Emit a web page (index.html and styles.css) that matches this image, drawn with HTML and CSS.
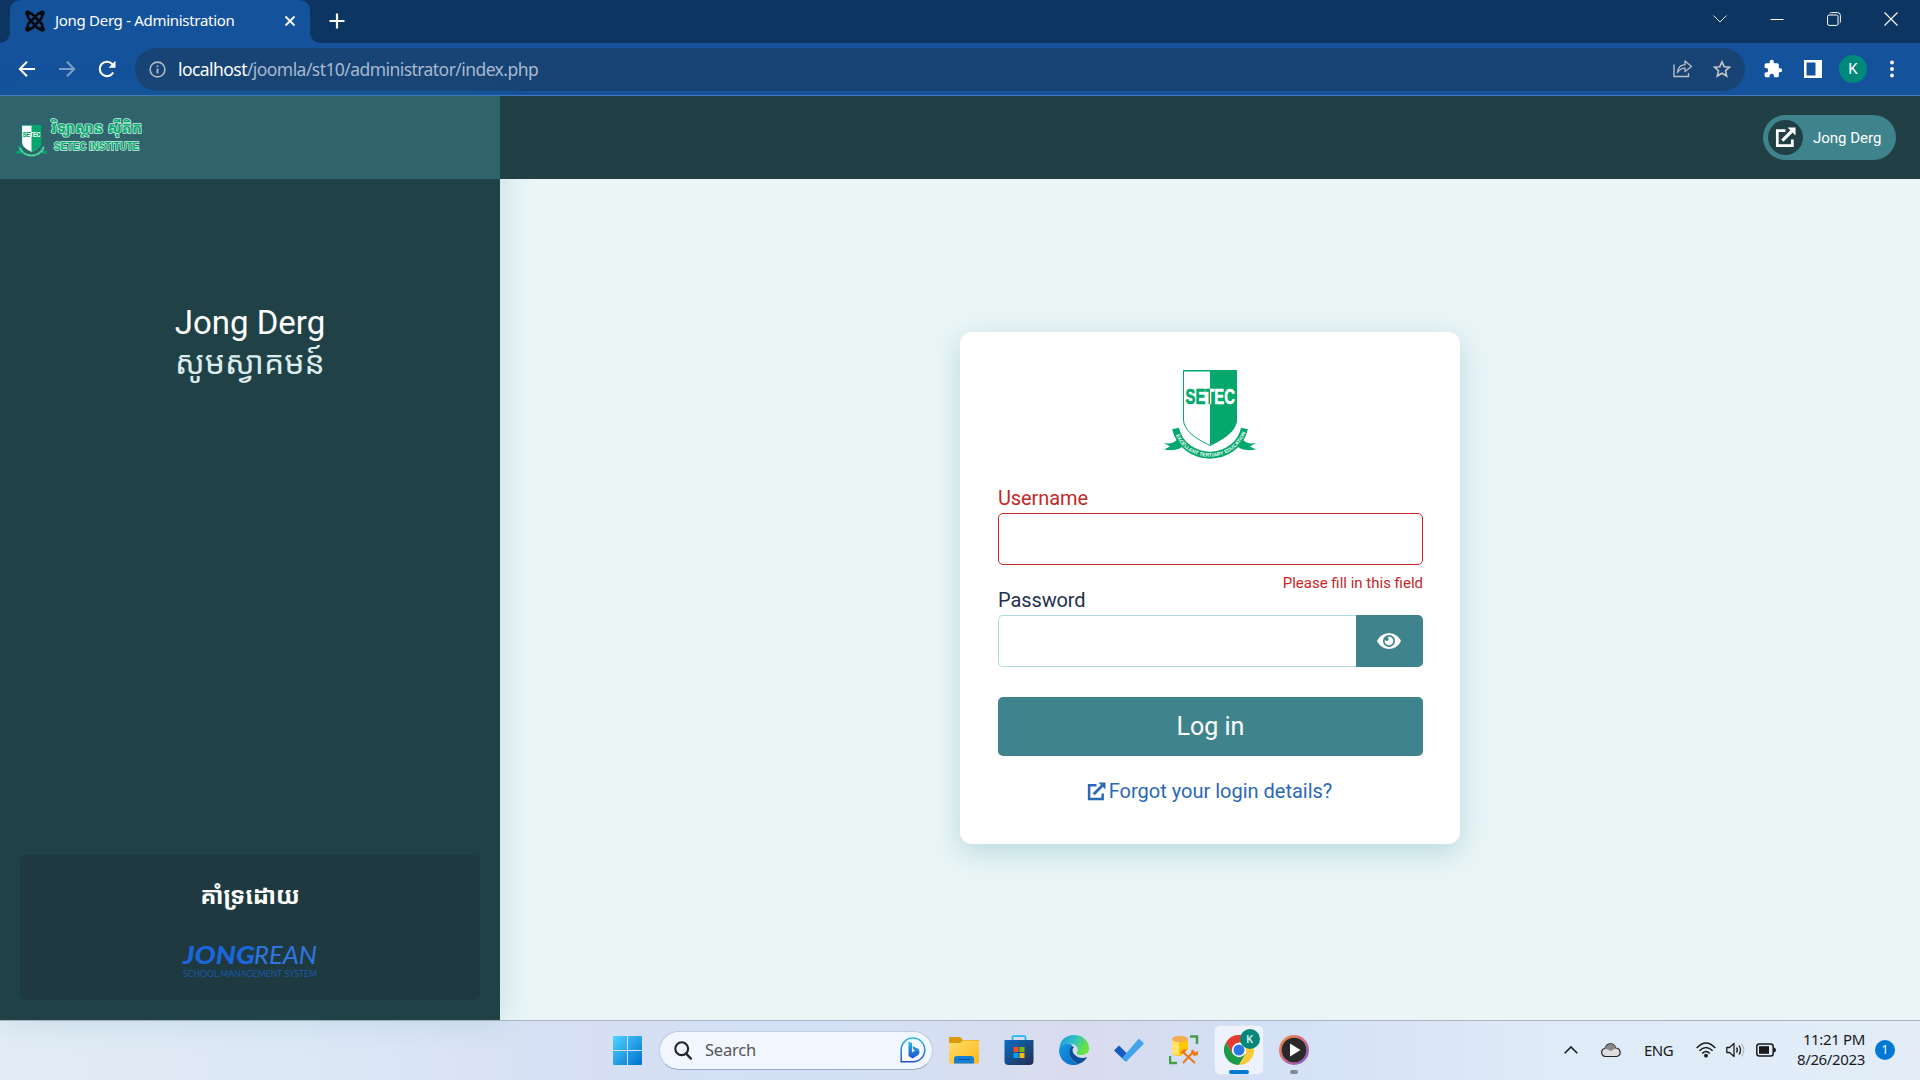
FILE: index.html
```html
<!DOCTYPE html>
<html lang="en">
<head>
<meta charset="utf-8">
<title>Jong Derg - Administration</title>
<link rel="stylesheet" href="styles.css">
</head>
<body>
<svg class="defs" width="0" height="0" aria-hidden="true">
  <defs>
    <linearGradient id="split" gradientUnits="userSpaceOnUse" x1="0" y1="0" x2="92" y2="0">
      <stop offset=".5" stop-color="#04a76c"/><stop offset=".5" stop-color="#fff"/>
    </linearGradient>
    <symbol id="crest" viewBox="0 0 92 89">
      <path d="M19.500 .5H72.500V49C72.500 61 59.500 69 46 75.500C32.500 69 19.500 61 19.500 49Z" fill="#fff" stroke="#04a76c"/>
      <path d="M46 .5H73V49C73 61 59.500 69 46 75.500ZM19.500 0H73V1.500H19.500Z" fill="#04a76c"/>
      <path d="M14 62C16 70 10 75 0 73L6 76.500L0 79.500C9 81 16 80 20 75ZM78 62C76 70 82 75 92 73L86 76.500L92 79.500C83 81 76 80 72 75Z" fill="#04a76c"/>
      <path d="M11.500 58.500C20 94 72 94 80.500 58.500" fill="none" stroke="#04a76c" stroke-width="7"/>
      <path id="ribbon" d="M10.500 62.500C23 95 69 95 82 61.500" fill="none"/>
      <text class="crest-name" x="21.500" y="33.500" textLength="49.500" lengthAdjust="spacingAndGlyphs" fill="url(#split)">SETEC</text>
      <text class="crest-motto"><textPath href="#ribbon" startOffset="3">EXCELLENT TERTIARY EDUCATION</textPath></text>
    </symbol>
    <symbol id="external" viewBox="0 0 20 20">
      <path d="M10 3.500H2.200V17.800H16.500V12" fill="none" stroke="currentColor" stroke-width="2.600"/>
      <path d="M7 13L16 4" fill="none" stroke="currentColor" stroke-width="3"/>
      <path d="M12 .5H19.500V8Z" fill="currentColor"/>
    </symbol>
  </defs>
</svg>

<header class="browser">
  <div class="tabstrip">
    <div class="tab">
      <svg class="favicon" viewBox="0 0 20 22">
        <g fill="none" stroke="#05080d" stroke-width="2.600"><path d="M3 3C7 2 8 5 10 7L16 13C18 15 18 18 16 19"/><path d="M17 3C13 2 12 5 10 7L4 13C2 15 2 18 4 19"/><path d="M3 3C2 6 3 8 5 10L10 15C12 18 14 20 17 19"/><path d="M17 3C18 6 17 8 15 10L10 15C8 18 6 20 3 19"/></g>
        <g fill="#05080d"><circle cx="2.800" cy="3" r="2.600"/><circle cx="17.200" cy="3" r="2.600"/><circle cx="2.800" cy="19" r="2.600"/><circle cx="17.200" cy="19" r="2.600"/></g>
      </svg>
      <span class="tab-title">Jong Derg - Administration</span>
      <svg class="tab-close" viewBox="0 0 12 12"><path d="M1.500 1.500L10.500 10.500M10.500 1.500L1.500 10.500" stroke="#fff" stroke-width="1.800"/></svg>
    </div>
    <svg class="newtab" viewBox="0 0 16 16"><path d="M8 .5V15.500M.5 8H15.500" stroke="#fff" stroke-width="2.200"/></svg>
    <div class="window-controls">
      <svg width="14" height="14" viewBox="0 0 14 14"><path d="M.5 3.500L7 10L13.500 3.500" fill="none" stroke="#dde5ee"/></svg>
      <svg width="14" height="14" viewBox="0 0 14 14"><path d="M.5 7.500H13.500" stroke="#fff"/></svg>
      <svg width="14" height="14" viewBox="0 0 14 14"><rect x=".6" y="3" width="10.400" height="10.400" rx="1.500" fill="none" stroke="#fff"/><path d="M3 1.300Q3 .6 4.500 .6H10.500Q13.400 .6 13.400 3.500V9.500Q13.400 11 12.700 11" fill="none" stroke="#fff"/></svg>
      <svg width="14" height="14" viewBox="0 0 14 14"><path d="M.5 .5L13.500 13.500M13.500 .5L.5 13.500" stroke="#fff" stroke-width="1.100"/></svg>
    </div>
  </div>
  <div class="toolbar">
    <svg class="nav" viewBox="0 0 18 18"><path d="M17 9H2M9 1.800L1.800 9L9 16.200" fill="none" stroke="#fff" stroke-width="2"/></svg>
    <svg class="nav dim" viewBox="0 0 18 18"><path d="M1 9H16M9 1.800L16.200 9L9 16.200" fill="none" stroke="#fff" stroke-width="2"/></svg>
    <svg class="nav" viewBox="0 0 18 18"><path d="M15.200 12.500A7.200 7.200 0 1 1 14.400 4.200" fill="none" stroke="#fff" stroke-width="2.100"/><path d="M17.500 .8V7.800H10.500Z" fill="#fff"/></svg>
    <div class="address">
      <svg class="info" viewBox="0 0 17 17"><circle cx="8.500" cy="8.500" r="7.400" fill="none" stroke="#b3bac3" stroke-width="1.600"/><path d="M8.500 7.500V12.500M8.500 4.400V6.100" stroke="#b3bac3" stroke-width="1.900"/></svg>
      <span class="url"><b>localhost</b>/joomla/st10/administrator/index.php</span>
      <svg class="share" viewBox="0 0 20 20"><path d="M1 5.500V17.500H15.500V14" fill="none" stroke="#b8bec6" stroke-width="1.400"/><path d="M4.500 13.500C5 8 8 6 12 5.700V2L18.500 7.500L12 12.500V9.200C8.500 9.300 6.500 10.500 4.500 13.500Z" fill="none" stroke="#b8bec6" stroke-width="1.300" stroke-linejoin="round"/></svg>
      <svg class="star" viewBox="0 0 18 18"><path d="M9 1.800L11.200 6.700L16.500 7.200L12.500 10.700L13.700 16L9 13.200L4.300 16L5.500 10.700L1.500 7.200L6.800 6.700Z" fill="none" stroke="#c3c6ca" stroke-width="1.600"/></svg>
    </div>
    <svg class="puzzle" viewBox="0 0 24 24"><path fill="#fff" d="M20.500 11H19V7a2 2 0 0 0-2-2h-4V3.500a2.500 2.500 0 0 0-5 0V5H4a2 2 0 0 0-2 2v3.800h1.500a2.700 2.700 0 0 1 0 5.400H2V20a2 2 0 0 0 2 2h3.800v-1.500a2.700 2.700 0 0 1 5.400 0V22H17a2 2 0 0 0 2-2v-4h1.500a2.500 2.500 0 0 0 0-5z"/></svg>
    <svg class="panel" viewBox="0 0 18 18"><path fill="#fff" fill-rule="evenodd" d="M0 0H18V18H0ZM2.500 2.500V15.500H11.500V2.500Z"/></svg>
    <span class="profile">K</span>
    <svg class="menu" viewBox="0 0 4 18"><g fill="#fff"><circle cx="2" cy="2.500" r="1.900"/><circle cx="2" cy="9" r="1.900"/><circle cx="2" cy="15.500" r="1.900"/></g></svg>
  </div>
</header>

<div class="page">
  <aside class="sidebar">
    <div class="brand">
      <svg class="brand-crest" viewBox="0 0 92 89"><use href="#crest"/></svg>
      <svg class="brand-name" viewBox="0 0 100 44">
        <text class="brand-kh" x="1" y="19" textLength="91" lengthAdjust="spacingAndGlyphs">វិទ្យាស្ថាន ស៊ីតិក</text>
        <text class="brand-en" x="4" y="36" textLength="85" lengthAdjust="spacingAndGlyphs">SETEC INSTITUTE</text>
      </svg>
    </div>
    <div class="greeting">
      <div class="site-name">Jong Derg</div>
      <div class="welcome" lang="km">សូមស្វាគមន៍</div>
    </div>
    <div class="support">
      <div class="support-title" lang="km">គាំទ្រដោយ</div>
      <svg class="jongrean" viewBox="0 0 150 44">
        <text class="jr-bold" x="8" y="23.500" textLength="72" lengthAdjust="spacingAndGlyphs">JONG</text>
        <text class="jr-thin" x="79" y="23.500" textLength="63" lengthAdjust="spacingAndGlyphs">REAN</text>
        <text class="jr-sub" x="8" y="36.500" textLength="134" lengthAdjust="spacingAndGlyphs">SCHOOL MANAGEMENT SYSTEM</text>
      </svg>
    </div>
  </aside>
  <div class="content">
    <div class="topbar">
      <a class="site-link"><span class="site-icon"><svg viewBox="0 0 20 20"><use href="#external"/></svg></span>Jong Derg</a>
    </div>
    <main class="stage">
      <form class="card">
        <svg class="crest" viewBox="0 0 92 89"><use href="#crest"/></svg>
        <label class="label invalid">Username</label>
        <div class="input input-invalid"></div>
        <div class="error">Please fill in this field</div>
        <label class="label pass">Password</label>
        <div class="group">
          <div class="input"></div>
          <div class="reveal"><svg viewBox="0 0 24 16"><path d="M0 8C5-2.500 19-2.500 24 8C19 18.500 5 18.500 0 8Z" fill="#fff"/><circle cx="12" cy="8" r="5.200" fill="none" stroke="#3f848d" stroke-width="1.700"/><circle cx="9.800" cy="6" r="1.900" fill="#3f848d"/></svg></div>
        </div>
        <div class="login">Log in</div>
        <a class="forgot"><svg viewBox="0 0 20 20"><use href="#external"/></svg><span>Forgot your login details?</span></a>
      </form>
    </main>
  </div>
</div>

<footer class="taskbar">
  <svg class="start" viewBox="0 0 29 29"><defs><linearGradient id="win" x1="0" y1="0" x2="29" y2="29" gradientUnits="userSpaceOnUse"><stop stop-color="#4fd5ff"/><stop offset="1" stop-color="#006fce"/></linearGradient></defs><path fill="url(#win)" d="M1 0H14V14H0V1Q0 0 1 0ZM15 0H28Q29 0 29 1V14H15ZM0 15H14V29H1Q0 29 0 28ZM15 15H29V28Q29 29 28 29H15Z"/></svg>
  <div class="search">
    <svg class="lens" viewBox="0 0 18 19"><circle cx="7.700" cy="7.700" r="6.400" fill="none" stroke="#222" stroke-width="2.100"/><path d="M12 12.500L16.800 17.500" stroke="#222" stroke-width="2.500" stroke-linecap="round"/></svg>
    <span>Search</span>
    <svg class="bing" viewBox="0 0 26 26"><defs><linearGradient id="bg" x1="0" y1="0" x2="0" y2="1"><stop stop-color="#23bcea"/><stop offset="1" stop-color="#2550c8"/></linearGradient></defs><path d="M1.200 24.700V13A11.800 11.800 0 1 1 13 24.700Z" fill="#f6f9ff" stroke="url(#bg)" stroke-width="1.500"/><path d="M8.500 4.500L12 6V15.500L15 13.500L13 12L12.500 9L18.500 12Q21 16 17.500 18.500L12.500 21.500L8.500 19Z" fill="url(#bg)"/></svg>
  </div>
  <div class="apps">
    <div class="app"><svg viewBox="0 0 30 30"><defs><linearGradient id="fo" x1="0" y1="0" x2="1" y2="1"><stop stop-color="#ffdc70"/><stop offset="1" stop-color="#fdb813"/></linearGradient></defs><path d="M0 3Q0 2 1 2H11L14 5H29Q30 5 30 6V14H0Z" fill="#dc9a0b"/><path d="M0 8H11L14 5.500H29Q30 5.500 30 7V27Q30 28.500 29 28.500H1Q0 28.500 0 27Z" fill="url(#fo)"/><path d="M5 28.500V24Q5 21 8 21H22Q25 21 25 24V28.500Z" fill="#127ed6"/><path d="M9 24.500H21" stroke="#0754a2"/></svg></div>
    <div class="app"><svg viewBox="0 0 30 30"><defs><linearGradient id="st" x1="0" y1="0" x2="1" y2="1"><stop stop-color="#0a6dc3"/><stop offset="1" stop-color="#242e50"/></linearGradient></defs><path d="M8.500 7V2.500Q8.500 1.200 9.700 1.200H20.300Q21.500 1.200 21.500 2.500V7" fill="none" stroke="#23b6ef" stroke-width="1.800"/><path d="M.5 5H29.500V26Q29.500 30 25.500 30H4.500Q.5 30 .5 26Z" fill="url(#st)"/><path fill="#f25022" d="M9.500 12h5v5h-5z"/><path fill="#7fba00" d="M15.500 12h5v5h-5z"/><path fill="#00a4ef" d="M9.500 18h5v5h-5z"/><path fill="#ffb900" d="M15.500 18h5v5h-5z"/></svg></div>
    <div class="app"><svg viewBox="0 0 30 30"><defs><linearGradient id="ed" x1="0" y1="0" x2="1" y2=".4"><stop stop-color="#1597d9"/><stop offset=".5" stop-color="#2fc0c8"/><stop offset="1" stop-color="#67e53a"/></linearGradient><linearGradient id="ed2" x1="0" y1="0" x2="1" y2="1"><stop stop-color="#169be0"/><stop offset="1" stop-color="#0868c5"/></linearGradient></defs><path d="M.5 13C1 5 7 0 15 0C24 0 30 6 30 13C30 18 27 20 22 20C18 20 17 19 18 17C20 14 18 10 13 9C8 8 3 9 .5 13Z" fill="url(#ed)"/><path d="M0 15C1 10 6 8 11 9C15 10 12 13 11 17C10 23 15 28 20 29C9 33 0 25 0 15Z" fill="url(#ed2)"/><path d="M13 11C9 15 9 24 19 29C23 28 27 25 28 22C24 24 19 23 16 20C13 17 13 14 15 12Z" fill="#0d4f96"/></svg></div>
    <div class="app"><svg viewBox="0 0 30 30"><path d="M0 15.500L5 10.500L14.500 20L11 26Z" fill="#185abd"/><path d="M8 23L25 3.500L30 8.500L12 27Z" fill="#41a5ee"/></svg></div>
    <div class="app"><svg viewBox="0 0 30 30"><path d="M3 4V18Q3 21 11 21H12L19 14V4Z" fill="#ffc800"/><path d="M3 4V18Q3 20 10 20V7Z" fill="#ffe36b"/><ellipse cx="11" cy="4" rx="8" ry="3.300" fill="#f0ad55"/><path d="M21 1.500H28V9M1 21V28H8" fill="none" stroke="#46a047" stroke-width="2.500"/><path d="M14 17L26 28M25 16L14 28" stroke="#ed7916" stroke-width="2"/><path d="M11 18Q14 13 18 14.500L15 19ZM22 18L23 14L26 17.500L29 16V20L25 21Z" fill="#ed7916"/></svg></div>
    <div class="app active">
      <svg viewBox="0 0 30 30"><circle cx="15" cy="15" r="15" fill="#e7e9ed"/><path d="M2 7.500A15 15 0 0 1 28 7.500H15L8.500 19Z" fill="#e33b2e"/><path d="M2 7.500A15 15 0 0 0 15 30L21.500 19L8.500 18.500Z" fill="#1c9b4b"/><path d="M28 7.500A15 15 0 0 1 15 30L21.500 19L15 7.500Z" fill="#fcc934"/><circle cx="15" cy="15" r="7.200" fill="#fff"/><circle cx="15" cy="15" r="5.500" fill="#2b76e5"/></svg>
      <span class="app-badge">K</span><i class="running wide"></i>
    </div>
    <div class="app">
      <svg viewBox="0 0 30 30"><defs><linearGradient id="me" x1="0" y1="0" x2="1" y2="1"><stop stop-color="#f09030"/><stop offset=".5" stop-color="#d2688b"/><stop offset="1" stop-color="#7058cf"/></linearGradient></defs><circle cx="15" cy="15" r="15" fill="url(#me)"/><circle cx="15" cy="15" r="12.300" fill="#292929"/><path d="M11 8.500L21.500 15L11 21.500Z" fill="#fff"/></svg>
      <i class="running"></i>
    </div>
  </div>
  <div class="tray">
    <svg class="chev" viewBox="0 0 14 8"><path d="M.7 7.300L7 1L13.300 7.300" fill="none" stroke="#1a1a1a" stroke-width="1.600"/></svg>
    <svg class="cloud" viewBox="0 0 20 15"><path d="M4.500 13.500C-.5 13-.5 6 4 5.500C6-.5 13-.5 14.500 5C20 5 21 13 15.500 13.500Z" fill="#ddd" stroke="#222" stroke-width="1.200"/><path d="M4 5.500C6-.5 13-.5 14.500 5L10 8Z" fill="#888"/></svg>
    <span class="lang">ENG</span>
    <svg class="wifi" viewBox="0 0 20 16"><g fill="none" stroke="#1a1a1a" stroke-width="1.500"><path d="M.7 6Q10-4 19.300 6"/><path d="M3.400 8.800Q10 2 16.600 8.800"/><path d="M6.200 11.500Q10 7.700 13.800 11.500"/></g><circle cx="10" cy="13.700" r="1.900" fill="#1a1a1a"/></svg>
    <svg class="sound" viewBox="0 0 20 16"><g fill="none" stroke="#1a1a1a" stroke-width="1.300"><path d="M.8 5.500H3.500L8 1.500V14.500L3.500 10.500H.8Z" stroke-linejoin="round"/><path d="M10.500 5.500Q12.300 8 10.500 10.500M13 3.500Q16 8 13 12.500"/><path d="M15.500 1.500Q20 8 15.500 14.500" stroke="#b5bcc5"/></g></svg>
    <svg class="battery" viewBox="0 0 20 14"><rect x=".8" y="1" width="16.400" height="12" rx="2.500" fill="none" stroke="#1a1a1a" stroke-width="1.500"/><rect x="3" y="3.200" width="10" height="7.600" fill="#1a1a1a"/><path d="M18 4.500Q20 5 20 7T18 9.500Z" fill="#1a1a1a"/></svg>
    <div class="clock"><span>11:21 PM</span><span>8/26/2023</span></div>
    <span class="count">1</span>
  </div>
</footer>
</body>
</html>
```
FILE: styles.css
```css
* { box-sizing: border-box; }
body { margin: 0; width: 1920px; height: 1080px; overflow: hidden; display: flex; flex-direction: column; font-family: Roboto, "Noto Sans Khmer", "Khmer OS", sans-serif; }
svg { display: block; flex: none; }
.defs { position: absolute; }

.browser { height: 96px; flex: none; background: #14529b; border-bottom: 1px solid #4779b8; font-family: "Noto Sans", "Open Sans", sans-serif; }
.tabstrip { height: 43px; display: flex; align-items: center; background: #0c3561; padding-left: 10px; }
.tab { width: 300px; height: 43px; background: #14529b; border-radius: 10px 10px 0 0; display: flex; align-items: center; padding: 0 14px 2px 15px; color: #fff; position: relative; }
.tab::before, .tab::after { content: ""; position: absolute; bottom: 0; width: 10px; height: 10px; }
.tab::before { left: -10px; background: radial-gradient(circle at 0 0, transparent 9.5px, #14529b 10px); }
.tab::after { right: -10px; background: radial-gradient(circle at 100% 0, transparent 9.5px, #14529b 10px); }
.favicon { width: 20px; height: 22px; }
.tab-title { flex: 1; margin-left: 10px; font-size: 15px; letter-spacing: -.3px; white-space: nowrap; margin-top: -1px; }
.tab-close { width: 12px; height: 12px; }
.newtab { width: 16px; height: 16px; margin: 0 0 2px 19px; }
.window-controls { margin: 0 22px 6px auto; display: flex; gap: 43px; }
.toolbar { height: 52px; display: flex; align-items: center; padding: 0 26px 0 18px; }
.nav { width: 18px; height: 18px; margin-right: 22px; }
.nav.dim { opacity: .45; }
.address { width: 1610px; height: 43px; border-radius: 22px; background: #184475; display: flex; align-items: center; padding: 0 14px; margin-left: -3px; }
.info { width: 17px; height: 17px; }
.url { flex: 1; margin-left: 12px; color: #a9bad0; font-size: 17.5px; letter-spacing: -.56px; white-space: nowrap; }
.url b { color: #fff; font-weight: 400; }
.share { width: 20px; height: 20px; margin-right: 20px; }
.star { width: 18px; height: 18px; }
.puzzle { width: 20px; height: 20px; margin-left: 18px; }
.panel { width: 18px; height: 18px; margin-left: 21px; }
.profile { width: 28px; height: 28px; border-radius: 50%; background: #00897b; color: #fff; font: 15px/28px Roboto, sans-serif; text-align: center; margin-left: 17px; }
.menu { width: 4px; height: 18px; margin-left: auto; }

.page { height: 924px; flex: none; display: flex; }
.sidebar { width: 500px; background: #204246; display: flex; flex-direction: column; color: #fff; box-shadow: 4px 0 30px rgba(40, 130, 145, .16); position: relative; }
.brand { height: 83px; background: #30646d; display: flex; align-items: flex-start; padding: 18px 0 0 15px; }
.brand-crest { width: 33px; height: 32px; margin-top: 11px; }
.brand-name { width: 100px; height: 44px; margin-left: 2px; }
.brand-kh, .brand-en { fill: #04a76c; stroke: #c6efe0; stroke-width: 1.6px; paint-order: stroke; font-weight: 700; }
.brand-kh { font-family: "Noto Sans Khmer", "Khmer OS", sans-serif; font-size: 15px; }
.brand-en { font-family: "Liberation Sans", sans-serif; font-size: 11px; }
.greeting { margin-top: 124px; text-align: center; font-size: 32px; line-height: 40px; }
.site-name { font-size: 33px; }
.welcome { color: #dcecee; white-space: nowrap; }
.support { height: 145px; margin: auto 20px 20px; border-radius: 5px; background: #1e3a40; display: flex; flex-direction: column; align-items: center; padding-top: 25px; }
.support-title { font-size: 24px; font-weight: 700; line-height: 32px; white-space: nowrap; }
.jongrean { width: 150px; height: 44px; margin-top: 28px; }
.jr-bold, .jr-thin, .jr-sub { font-family: Lato, sans-serif; fill: #1b66da; }
.jr-bold { font-size: 25px; font-weight: 900; font-style: italic; }
.jr-thin { font-size: 25px; font-style: italic; fill: #2f78e0; }
.jr-sub { font-size: 9.5px; fill: #1a58ad; }

.content { flex: 1; display: flex; flex-direction: column; }
.topbar { height: 83px; background: #204045; display: flex; justify-content: flex-end; align-items: center; padding-right: 24px; position: relative; z-index: 1; }
.site-link { width: 133px; height: 45px; border-radius: 23px; background: #3f848d; color: #fff; display: flex; align-items: center; gap: 10px; padding-left: 5px; font-size: 15px; line-height: 18px; white-space: nowrap; }
.site-icon { width: 35px; height: 35px; border-radius: 50%; background: #204045; display: flex; align-items: center; justify-content: center; }
.site-icon svg { width: 21px; height: 21px; }
.stage { flex: 1; display: flex; justify-content: center; background: #ebf5f6; padding-top: 153px; }
.card { width: 500px; height: 512px; background: #fff; border-radius: 12px; box-shadow: 0 8px 28px rgba(35, 140, 155, .25); padding: 38px 37px 0 38px; display: flex; flex-direction: column; }
.crest { width: 92px; height: 89px; align-self: center; margin-right: 1px; }
.crest-name { font-family: "Liberation Sans", sans-serif; font-weight: 700; font-size: 22px; stroke: url(#split); stroke-width: .6px; }
.crest-motto { font: 700 5px "Liberation Sans", sans-serif; fill: #fff; letter-spacing: .05px; }
.label { font-size: 20px; line-height: 24px; letter-spacing: -.1px; color: #22314d; margin-top: 27px; }
.label.invalid { color: #c52827; }
.input { height: 52px; border: 1px solid #b3d9dd; border-radius: 5px; margin-top: 3px; background: #fff; }
.input-invalid { border-color: #c52827; }
.error { color: #c52827; font-size: 15px; line-height: 18px; text-align: right; margin-top: 9px; }
.label.pass { margin-top: -4px; }
.group { display: flex; margin-top: 3px; }
.group .input { flex: 1; margin: 0; border-radius: 5px 0 0 5px; border-right: 0; }
.reveal { width: 67px; background: #3f848d; border-radius: 0 5px 5px 0; display: flex; align-items: center; justify-content: center; padding: 0 1px 1px 0; }
.reveal svg { width: 24px; height: 16px; }
.login { height: 59px; margin-top: 30px; border-radius: 5px; background: #3f848d; color: #fff; font-size: 25px; line-height: 59px; text-align: center; }
.forgot { color: #2a69b8; display: flex; justify-content: center; align-items: center; gap: 3px; font-size: 20px; line-height: 24px; margin-top: 23px; padding-right: 2px; white-space: nowrap; }
.forgot svg { width: 19px; height: 19px; }

.taskbar { height: 60px; flex: none; border-top: 1px solid #aab4c2; background: linear-gradient(90deg, #e2ecf5 0, #dde8f6 300px, #d6dff4 600px, #d2e1f6 800px, #d9dcee 1080px, #d3dff5 1240px, #dfebf8 1550px, #e2edf8 1920px); display: flex; align-items: center; padding: 0 0 1px 613px; font-family: "Noto Sans", sans-serif; }
.start { width: 29px; height: 29px; }
.search { width: 274px; height: 39px; margin-left: 17px; border: 1px solid #c2cbe0; border-bottom-color: #9eabc1; border-radius: 20px; background: #f2f6fe; display: flex; align-items: center; padding: 0 6px 0 14px; color: #555; font-size: 16.5px; }
.search span { flex: 1; margin-left: 13px; letter-spacing: -.2px; margin-top: -1px; }
.lens { width: 18px; height: 19px; }
.bing { width: 26px; height: 26px; }
.apps { display: grid; grid-template-columns: repeat(7, 55px); margin-left: 3px; }
.app { width: 48px; height: 48px; justify-self: center; border-radius: 5px; display: flex; align-items: center; justify-content: center; position: relative; }
.app svg { width: 30px; height: 30px; }
.active { background: #edf2fc; box-shadow: 0 0 0 1px #dde4f1; }
.app-badge { position: absolute; left: 25px; top: 3px; width: 20px; height: 20px; border-radius: 50%; background: #07867a; color: #d6efe9; font-size: 11px; font-weight: 600; line-height: 20px; text-align: center; }
.running { position: absolute; bottom: 0; left: 20px; width: 8px; height: 4px; border-radius: 2px; background: #848895; }
.running.wide { left: 14px; width: 20px; background: #0078d4; }
.tray { margin-left: auto; padding-right: 25px; display: flex; align-items: center; color: #1a1a1a; }
.chev { width: 14px; height: 8px; margin-right: 23px; }
.cloud { width: 20px; height: 15px; margin-right: 23px; }
.lang { width: 29px; font-size: 15px; letter-spacing: -.5px; margin-right: 23px; margin-top: -1px; }
.wifi { width: 20px; height: 16px; margin-right: 10px; }
.sound { width: 20px; height: 16px; margin-right: 10px; }
.battery { width: 20px; height: 14px; }
.clock { width: 89px; display: flex; flex-direction: column; align-items: flex-end; font-size: 15px; line-height: 20px; letter-spacing: -.35px; white-space: nowrap; margin-top: -3px; }
.count { width: 20px; height: 20px; margin-left: 10px; border-radius: 50%; background: #0078d4; color: #fff; font-size: 12px; line-height: 20px; text-align: center; }
```
